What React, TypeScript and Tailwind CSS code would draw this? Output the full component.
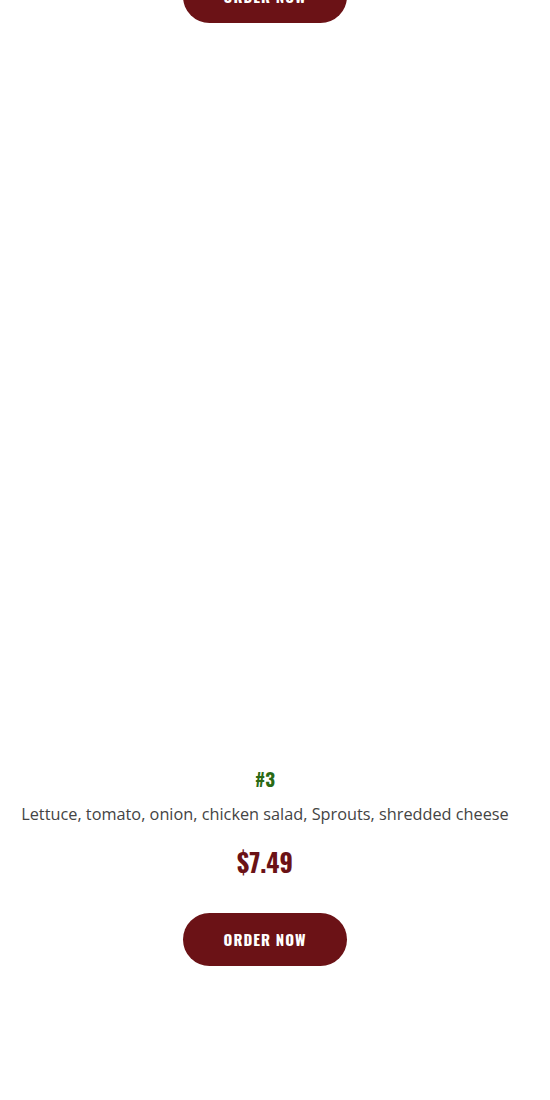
const heading = "font-['Oswald','Liberation_Sans_Narrow','DejaVu_Sans_Condensed',sans-serif] font-bold";

function OrderButton() {
    return (
        <button
            className={`${heading} h-[53px] w-[164px] rounded-full bg-[#6b1216] text-[15px] tracking-[1px] text-white uppercase`}
        >
            Order Now
        </button>
    );
}

export default function App() {
    return (
        <div className="w-[550px] bg-white font-['Open_Sans',sans-serif] overflow-hidden h-[1100px]">
            <div className="-mt-[30px] flex w-[530px] flex-col items-center">
                <OrderButton />

                {/* image slot (empty) */}
                <div className="h-[743px] w-full" />

                <h3 className={`${heading} text-[19px] leading-[24px] text-[#2a6a14]`}>#3</h3>
                <p className="mt-[12px] text-center text-[16.3px] leading-[24px] text-[#444]">
                    Lettuce, tomato, onion, chicken salad, Sprouts, shredded cheese
                </p>
                <div className={`${heading} mt-[20px] text-[25px] leading-[32px] text-[#6b1216]`}>$7.49</div>
                <div className="mt-[35px]">
                    <OrderButton />
                </div>
            </div>
        </div>
    );
}
